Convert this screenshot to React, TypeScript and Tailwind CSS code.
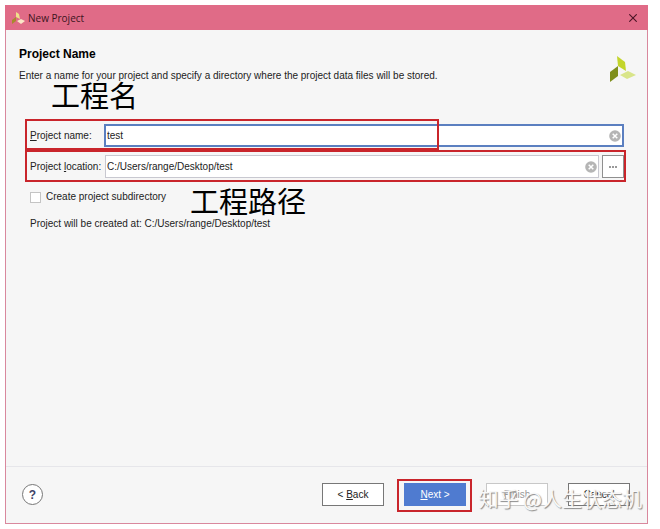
import { useState, type ReactNode } from 'react';

function BrandMark({ className }: { className: string }) {
  return (
    <svg viewBox="0 0 26 27" className={className} aria-hidden="true">
      <path d="M7 0 L15 6 L16 15 L8 10 Z" fill="#c3d52b" />
      <path d="M8 10 L8 20 L0 26 L0 16 Z" fill="#7f8f1c" />
      <path d="M10 19 L18 15 L26 19 L17 23 Z" fill="#d9e58a" />
    </svg>
  );
}

function ClearIcon() {
  return (
    <svg viewBox="0 0 12 12" className="size-3" aria-hidden="true">
      <circle cx="6" cy="6" r="5.8" fill="#b5b5b5" />
      <path d="M3.7 3.7 L8.3 8.3 M8.3 3.7 L3.7 8.3" stroke="#fff" strokeWidth="1.5" />
    </svg>
  );
}

function Note({ className, children }: { className: string; children: ReactNode }) {
  return (
    <span
      className={`pointer-events-none absolute whitespace-nowrap text-[29px] leading-8 text-black ${className}`}
    >
      {children}
    </span>
  );
}

export default function App() {
  const [name, setName] = useState('test');
  const [location, setLocation] = useState('C:/Users/range/Desktop/test');

  return (
    <div className="flex min-h-screen bg-white pt-[5px] pr-3 pb-[5px] pl-[5px] font-['Liberation_Sans','Noto_Sans_CJK_SC',sans-serif] text-[10px] leading-4 text-[#222]">
      <div className="flex flex-1 flex-col border border-[#d9889d] bg-[#f6f6f6]">
        <header className="-mx-px -mt-px flex h-[25px] items-center bg-[#e06b87] pr-[7px] pl-[7px]">
          <svg viewBox="0 0 13 12" className="h-3 w-[13px]" aria-hidden="true">
            <path d="M4 0 L7 2 L8 7 L4 5 Z" fill="#efe08a" />
            <path d="M4 5 L4 9 L0 12 L0 8 Z" fill="#a68a2c" />
            <path d="M5 9 L9 7 L13 9 L9 12 Z" fill="#fbe6c8" />
          </svg>
          <span className="ml-[3px] font-['Open_Sans','Noto_Sans',sans-serif] text-[10px] text-[#3c1520]">
            New Project
          </span>
          <button type="button" aria-label="Close" className="ml-auto flex size-4 items-center justify-center">
            <svg viewBox="0 0 8 8" className="size-2" aria-hidden="true">
              <path d="M0.3 0.3 L7.7 7.7 M7.7 0.3 L0.3 7.7" stroke="#4a1525" strokeWidth="1.1" />
            </svg>
          </button>
        </header>

        <main className="flex-1 pr-[23px]">
          <div className="flex h-[94px] justify-between pt-4 pl-[13px]">
            <div className="relative">
              <h1 className="text-xs leading-4 font-bold text-black">Project Name</h1>
              <p className="mt-[6px]">
                Enter a name for your project and specify a directory where the project data files will be stored.
              </p>
              <Note className="top-[35px] left-8">工程名</Note>
            </div>
            <BrandMark className="-mr-3 mt-[10px] h-[27px] w-[26px]" />
          </div>

          <form className="pl-6">
            <div className="relative flex h-[23px] items-center">
              <label htmlFor="project-name" className="w-[74px] shrink-0 whitespace-nowrap">
                <u>P</u>roject name:
              </label>
              <div className="flex h-[23px] flex-1 items-center border-2 border-[#5b7fc0] bg-white pr-px">
                <input
                  id="project-name"
                  value={name}
                  onChange={(e) => setName(e.target.value)}
                  className="min-w-0 flex-1 px-px outline-none"
                />
                <button type="button" aria-label="Clear project name" onClick={() => setName('')}>
                  <ClearIcon />
                </button>
              </div>
              <span className="pointer-events-none absolute -top-[5px] -left-[5px] h-[31px] w-[414px] border-2 border-[#c9252b]" />
            </div>

            <div className="relative mt-2 flex h-[23px] items-center">
              <label htmlFor="project-location" className="w-[75px] shrink-0 whitespace-nowrap">
                Project <u>l</u>ocation:
              </label>
              <div className="flex h-[23px] flex-1 items-center border border-[#c8c8d0] bg-white pr-px">
                <input
                  id="project-location"
                  value={location}
                  onChange={(e) => setLocation(e.target.value)}
                  className="min-w-0 flex-1 px-px outline-none"
                />
                <button type="button" aria-label="Clear project location" onClick={() => setLocation('')}>
                  <ClearIcon />
                </button>
              </div>
              <button
                type="button"
                aria-label="Browse"
                className="ml-[3px] flex h-[23px] w-[22px] items-center justify-center gap-px border border-[#8f8f8f] bg-white"
              >
                <span className="size-[2px] bg-[#999]" />
                <span className="size-[2px] bg-[#999]" />
                <span className="size-[2px] bg-[#999]" />
              </button>
              <span className="pointer-events-none absolute -top-[5px] -right-[2px] -left-[5px] h-8 border-2 border-[#c9252b]" />
            </div>

            <div className="relative mt-[11px]">
              <label className="flex w-fit items-center gap-[5px]">
                <input
                  type="checkbox"
                  className="size-[11px] appearance-none border border-[#c4c4c4] bg-white checked:bg-[#4a78cf]"
                />
                Create project subdirectory
              </label>
              <Note className="-top-[2px] left-40">工程路径</Note>
            </div>

            <p className="mt-[11px]">Project will be created at: {location}</p>
          </form>
        </main>

        <footer className="flex h-[57px] items-center border-t border-[#e6e6ea] pr-[17px] pb-px pl-4">
          <button
            type="button"
            aria-label="Help"
            className="flex size-[21px] items-center justify-center rounded-full border border-[#777] bg-white text-xs font-bold text-[#3f4468]"
          >
            ?
          </button>
          <div className="ml-auto flex gap-5">
            <button type="button" className="h-[23px] w-[62px] border border-[#777] bg-white">
              &lt; <u>B</u>ack
            </button>
            <div className="relative">
              <button type="button" className="h-[23px] w-[62px] bg-[#4f7bd0] text-white">
                <u>N</u>ext &gt;
              </button>
              <span className="pointer-events-none absolute -top-1 -right-[6px] -left-[7px] h-[33px] border-2 border-[#c9252b]" />
            </div>
            <button type="button" disabled className="h-[23px] w-[62px] border border-[#c8c8c8] bg-white text-[#999]">
              <u>F</u>inish
            </button>
            <div className="relative">
              <button type="button" className="h-[23px] w-[62px] border border-[#777] bg-white">
                Cancel
              </button>
              <span className="pointer-events-none absolute top-1 -right-3 font-['Noto_Sans_CJK_SC',sans-serif] text-xl leading-6 whitespace-nowrap text-[#f8f8f8] [text-shadow:1px_1px_1px_#888]">
                知乎 @人生状态机
              </span>
            </div>
          </div>
        </footer>
      </div>
    </div>
  );
}
